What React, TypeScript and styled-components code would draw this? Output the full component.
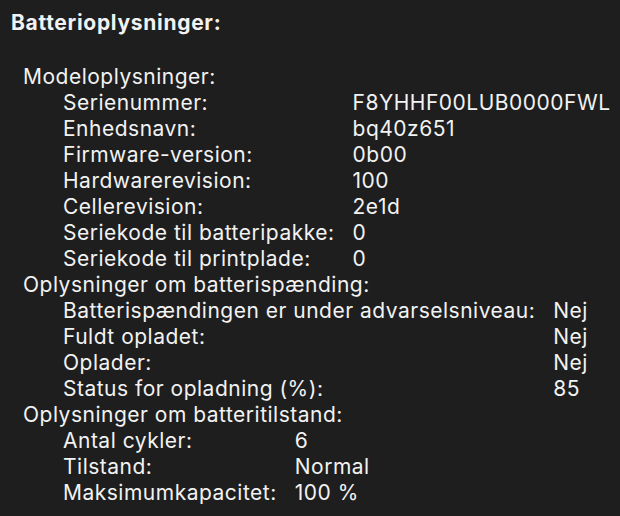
import React from 'react';
import styled, { createGlobalStyle } from 'styled-components';

const GlobalStyle = createGlobalStyle`
  html, body {
    margin: 0;
    padding: 0;
    background-color: #1e1e1e;
  }
  body {
    font-family: Inter, "Liberation Sans", sans-serif;
    color: #f2f2f2;
    -webkit-font-smoothing: antialiased;
  }
`;

// Styles
const Panel = styled.div`
  width: 620px;
  height: 516px;
  box-sizing: border-box;
  padding: 10px 0 0 11px;
  background-color: #1e1e1e;
  overflow: hidden;
`;

const Title = styled.h1`
  margin: 0 0 28px;
  font-size: 21px;
  line-height: 26px;
  font-weight: 700;
  letter-spacing: 0.7px;
`;

const Section = styled.section`
  padding-left: 12px;
  font-size: 21px;
  line-height: 26px;
  letter-spacing: 0.5px;
`;

const SectionTitle = styled.div``;

const Rows = styled.div`
  display: grid;
  grid-template-columns: max-content max-content;
  column-gap: 18px;
  padding-left: 40px;
`;

const Label = styled.span``;

const Value = styled.span``;

interface Group {
  title: string;
  rows: [string, string][];
}

const groups: Group[] = [
  {
    title: 'Modeloplysninger:',
    rows: [
      ['Serienummer:', 'F8YHHF00LUB0000FWL'],
      ['Enhedsnavn:', 'bq40z651'],
      ['Firmware-version:', '0b00'],
      ['Hardwarerevision:', '100'],
      ['Cellerevision:', '2e1d'],
      ['Seriekode til batteripakke:', '0'],
      ['Seriekode til printplade:', '0'],
    ],
  },
  {
    title: 'Oplysninger om batterispænding:',
    rows: [
      ['Batterispændingen er under advarselsniveau:', 'Nej'],
      ['Fuldt opladet:', 'Nej'],
      ['Oplader:', 'Nej'],
      ['Status for opladning (%):', '85'],
    ],
  },
  {
    title: 'Oplysninger om batteritilstand:',
    rows: [
      ['Antal cykler:', '6'],
      ['Tilstand:', 'Normal'],
      ['Maksimumkapacitet:', '100 %'],
    ],
  },
];

const App = () => {
  return (
    <>
      <GlobalStyle />
      <Panel>
        <Title>Batterioplysninger:</Title>
        {groups.map((group) => (
          <Section key={group.title}>
            <SectionTitle>{group.title}</SectionTitle>
            <Rows>
              {group.rows.map(([label, value]) => (
                <React.Fragment key={label}>
                  <Label>{label}</Label>
                  <Value>{value}</Value>
                </React.Fragment>
              ))}
            </Rows>
          </Section>
        ))}
      </Panel>
    </>
  );
};

export default App;
